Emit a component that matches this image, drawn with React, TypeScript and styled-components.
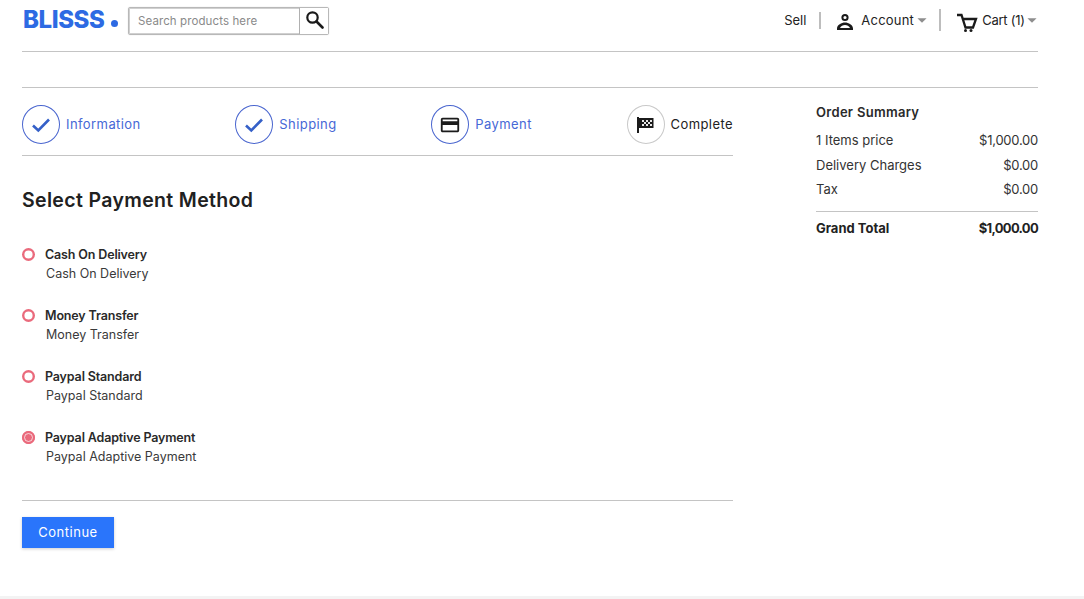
import React from "react";
import styled, { createGlobalStyle } from "styled-components";
import { MdPayment, MdArrowDropDown } from "react-icons/md";

const GlobalStyle = createGlobalStyle`
  html, body {
    margin: 0;
    padding: 0;
    background: #fff;
  }
  body {
    font-family: Inter, "Liberation Sans", sans-serif;
    color: #212121;
  }
`;

const Page = styled.div`
  height: 599px;
  box-sizing: border-box;
  border-bottom: 3px solid #f3f3f3;
  padding: 0 46px 0 22px;
  overflow: hidden;
`;

const Header = styled.header`
  height: 51px;
  border-bottom: 1px solid #c4c4c4;
  display: flex;
  align-items: flex-start;
  justify-content: space-between;
`;

const HeaderLeft = styled.div`
  display: flex;
  align-items: flex-start;
  padding: 7px 0 0 1px;
`;

const Logo = styled.div`
  width: 105px;
  display: flex;
  align-items: flex-end;
  font-size: 24px;
  line-height: 26px;
  font-weight: 800;
  letter-spacing: -0.4px;
  color: #2d6ae3;
`;

const LogoDot = styled.span`
  width: 7px;
  height: 7px;
  margin: 0 0 6px 6px;
  border-radius: 50%;
  background: #2d6ae3;
`;

const SearchBox = styled.form`
  width: 201px;
  height: 28px;
  box-sizing: border-box;
  border: 1px solid #b8b8b8;
  border-radius: 2px;
  box-shadow: 0 0 1px #c4c4c4;
  display: flex;
`;

const SearchInput = styled.input`
  flex: 1;
  min-width: 0;
  border: 1px solid #d0d0d0;
  border-right: 0;
  padding: 0 0 0 8px;
  font: 400 11.5px Inter, sans-serif;
  letter-spacing: 0.1px;
  outline: none;
  &::placeholder {
    color: #8a8a8a;
    opacity: 1;
  }
`;

const SearchButton = styled.button`
  width: 29px;
  padding: 0 0 2px 2px;
  border: 0;
  border-left: 1px solid #b0b0b0;
  background: #fff;
  display: flex;
  align-items: center;
  justify-content: center;
`;

const Nav = styled.nav`
  display: flex;
  align-items: center;
  padding-top: 9px;
  font-size: 13px;
  color: #222;
`;

const NavItem = styled.div<{ $spacing?: number }>`
  display: flex;
  align-items: center;
  height: 20px;
  letter-spacing: ${({ $spacing }) => $spacing ?? 0}px;
`;

const NavSeparator = styled.div<{ $tall?: boolean }>`
  width: 2px;
  height: ${({ $tall }) => ($tall ? "22px" : "17px")};
  margin: 0 ${({ $tall }) => ($tall ? "16px" : "14px")} 0 ${({ $tall }) => ($tall ? "12px" : "13px")};
  background: #bdbdbd;
`;

const NavIcon = styled.svg<{ $gap: number }>`
  width: 20px;
  height: 20px;
  margin: 2px ${({ $gap }) => $gap}px 0 0;
  flex: none;
  overflow: visible;
`;

const Caret = styled(MdArrowDropDown)`
  width: 22px;
  height: 22px;
  margin: 0 -5.4px 0 -3.4px;
  color: #8e8e8e;
`;

const Divider = styled.div`
  height: 35px;
  border-bottom: 1px solid #c4c4c4;
`;

const Columns = styled.main`
  display: flex;
  justify-content: space-between;
  align-items: flex-start;
`;

const Checkout = styled.section`
  width: 711px;
`;

const Steps = styled.ol`
  list-style: none;
  margin: 0;
  padding: 17px 0 11px;
  display: flex;
  justify-content: space-between;
  border-bottom: 1px solid #c4c4c4;
`;

const Step = styled.li<{ $done: boolean }>`
  display: flex;
  align-items: center;
  gap: 6px;
  font-size: 13px;
  letter-spacing: 0.42px;
  color: ${({ $done }) => ($done ? "#4668d6" : "#222")};
`;

const StepLabel = styled.span`
  padding-bottom: 2px;
`;

const StepCircle = styled.span<{ $done: boolean }>`
  box-sizing: border-box;
  width: 38px;
  height: 39px;
  border-radius: 50%;
  border: 1px solid ${({ $done }) => ($done ? "#4a66cf" : "#c9c9c9")};
  display: flex;
  align-items: center;
  justify-content: center;
`;

const StepSvg = styled.svg`
  flex: none;
  overflow: visible;
`;

const CardIcon = styled(MdPayment)`
  width: 22px;
  height: 22px;
  color: #1b1b1b;
`;

const Title = styled.h1`
  margin: 31px 0 32px;
  font-size: 19.5px;
  line-height: 26px;
  font-weight: 600;
  letter-spacing: 0.35px;
  color: #212121;
`;

const Methods = styled.div`
  display: flex;
  flex-direction: column;
  gap: 23px;
  padding-bottom: 34px;
  border-bottom: 1px solid #c4c4c4;
`;

const Method = styled.label`
  display: grid;
  grid-template-columns: 13px 1fr;
  column-gap: 10px;
  align-items: center;
`;

const Radio = styled.span<{ $checked?: boolean }>`
  width: 13px;
  height: 13px;
  border-radius: 50%;
  background: ${({ $checked }) => ($checked ? "#ea6a7c" : "#fff")};
  box-shadow: inset 0 0 0 2.4px #ea6a7c;
  position: relative;
  &::after {
    content: "";
    display: ${({ $checked }) => ($checked ? "block" : "none")};
    position: absolute;
    inset: 2px;
    border-radius: 50%;
    border: 1px solid rgba(255, 255, 255, 0.7);
  }
`;

const MethodName = styled.span`
  font-size: 12.5px;
  line-height: 19px;
  font-weight: 600;
  letter-spacing: -0.15px;
  color: #2a2a2a;
`;

const MethodNote = styled.span`
  grid-column: 2;
  padding-left: 1px;
  font-size: 12.5px;
  line-height: 19px;
  color: #3a3a3a;
`;

const ContinueButton = styled.button`
  display: block;
  margin-top: 16px;
  width: 92px;
  height: 31px;
  padding: 0 0 2px;
  border: 0;
  background: #2a75fb;
  box-shadow: 0 1px 3px rgba(0, 0, 0, 0.2);
  color: #fff;
  font: 400 13px Inter, sans-serif;
  letter-spacing: 0.5px;
`;

const Summary = styled.aside`
  width: 222px;
  padding-top: 14px;
  font-size: 13px;
  color: #333;
`;

const SummaryTitle = styled.h2`
  margin: 0 0 8px;
  font-size: 13px;
  line-height: 20px;
  font-weight: 600;
  letter-spacing: 0.3px;
  color: #2a2a2a;
`;

const SummaryRow = styled.div<{ $total?: boolean }>`
  display: flex;
  justify-content: space-between;
  height: ${({ $total }) => ($total ? "auto" : "24.5px")};
  line-height: 20px;
  font-weight: ${({ $total }) => ($total ? 700 : 400)};
  color: ${({ $total }) => ($total ? "#222" : "#333")};
  ${({ $total }) =>
    $total && "border-top: 1px solid #c4c4c4; margin-top: 7px; padding-top: 6px;"}
`;

const SummaryValue = styled.span<{ $total?: boolean }>`
  letter-spacing: ${({ $total }) => ($total ? "-0.7px" : "-0.25px")};
`;

const CheckIcon = () => (
  <StepSvg width="18" height="14" viewBox="0 0 18 14" fill="none" stroke="#3560c8" strokeWidth="2.600">
    <path d="M1 7.500 6.300 12.500 17 1.500" />
  </StepSvg>
);

const FlagIcon = () => (
  <StepSvg width="17" height="16" viewBox="0 0 17 16">
    <path d="M0 0h2v16H0zM2 1h14.500v10H2z" fill="#1b1b1b" />
    <path d="M5 3h2v2H5zM9 3h2v2H9zM13 3h2v2h-2zM7 5h2v2H7zM11 5h2v2h-2zM5 7h2v2H5zM9 7h2v2H9zM13 7h2v2h-2z" fill="#e8e8e8" />
  </StepSvg>
);

const steps = [
  { label: "Information", done: true, icon: <CheckIcon /> },
  { label: "Shipping", done: true, icon: <CheckIcon /> },
  { label: "Payment", done: true, icon: <CardIcon /> },
  { label: "Complete", done: false, icon: <FlagIcon /> },
];

const methods = [
  "Cash On Delivery",
  "Money Transfer",
  "Paypal Standard",
  "Paypal Adaptive Payment",
];

const App: React.FC = () => {
  return (
    <Page>
      <GlobalStyle />
      <Header>
        <HeaderLeft>
          <Logo>BLISSS<LogoDot /></Logo>
          <SearchBox>
            <SearchInput placeholder="Search products here" />
            <SearchButton type="button" aria-label="Search">
              <svg width="18" height="18" viewBox="0 0 18 18" fill="none" stroke="#1a1a1a" strokeWidth="2.200">
                <circle cx="6.500" cy="6.500" r="5.200" />
                <path d="M10.500 10.500 16.500 16.500" strokeWidth="2.600" strokeLinecap="round" />
              </svg>
            </SearchButton>
          </SearchBox>
        </HeaderLeft>
        <Nav>
          <NavItem>Sell</NavItem>
          <NavSeparator />
          <NavItem $spacing={0.2}>
            <NavIcon $gap={6} viewBox="0 1 20 20">
              <circle cx="10" cy="7.500" r="2.600" fill="none" stroke="#1a1a1a" strokeWidth="2" />
              <path d="M2 20v-1.500c0-3.500 4.500-6 8-6s8 2.500 8 6V20zM5 18h10c-.8-1.800-3-3-5-3s-4.200 1.200-5 3z" fill="#1a1a1a" fillRule="evenodd" />
            </NavIcon>
            Account
            <Caret />
          </NavItem>
          <NavSeparator $tall />
          <NavItem $spacing={-0.25}>
            <NavIcon $gap={5} viewBox="0 0 20 20">
              <path d="M0 4h4.500l4 12.500H16L19 8H6" fill="none" stroke="#1a1a1a" strokeWidth="2.300" />
              <circle cx="8.500" cy="19.500" r="1.500" fill="#1a1a1a" />
              <circle cx="14" cy="19.500" r="1.500" fill="#1a1a1a" />
            </NavIcon>
            Cart (1)
            <Caret />
          </NavItem>
        </Nav>
      </Header>
      <Divider />
      <Columns>
        <Checkout>
          <Steps>
            {steps.map((step) => (
              <Step key={step.label} $done={step.done}>
                <StepCircle $done={step.done}>{step.icon}</StepCircle>
                <StepLabel>{step.label}</StepLabel>
              </Step>
            ))}
          </Steps>
          <Title>Select Payment Method</Title>
          <Methods>
            {methods.map((method, index) => (
              <Method key={method}>
                <Radio $checked={index === methods.length - 1} />
                <MethodName>{method}</MethodName>
                <MethodNote>{method}</MethodNote>
              </Method>
            ))}
          </Methods>
          <ContinueButton type="button">Continue</ContinueButton>
        </Checkout>
        <Summary>
          <SummaryTitle>Order Summary</SummaryTitle>
          <SummaryRow><span>1 Items price</span><SummaryValue>$1,000.00</SummaryValue></SummaryRow>
          <SummaryRow><span>Delivery Charges</span><SummaryValue>$0.00</SummaryValue></SummaryRow>
          <SummaryRow><span>Tax</span><SummaryValue>$0.00</SummaryValue></SummaryRow>
          <SummaryRow $total><span>Grand Total</span><SummaryValue $total>$1,000.00</SummaryValue></SummaryRow>
        </Summary>
      </Columns>
    </Page>
  );
};

export default App;
